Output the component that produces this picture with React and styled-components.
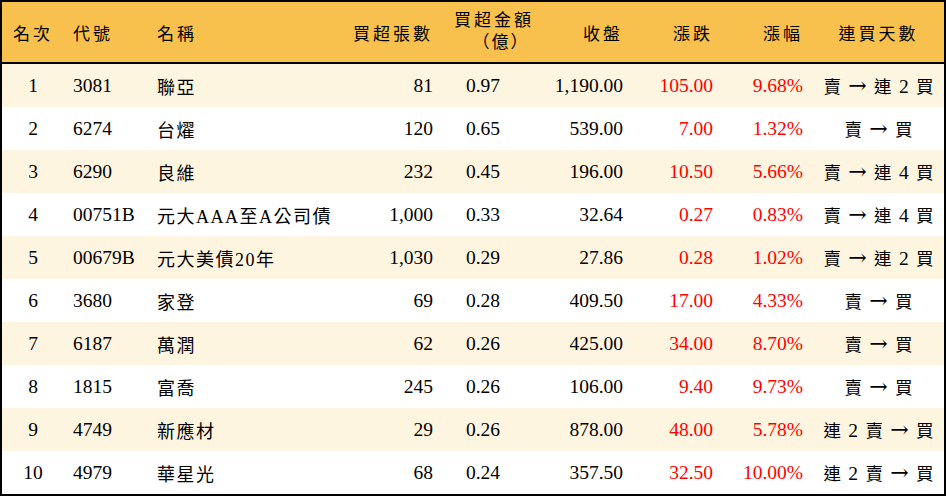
import React from 'react';
import styled, { createGlobalStyle } from 'styled-components';

const GlobalStyle = createGlobalStyle`
  html, body { margin: 0; padding: 0; background: #ffffff; }
  body {
    font-family: "Liberation Serif", "Noto Sans CJK TC", serif;
    color: #000;
  }
`;

const COLS = '62px 86px 195px 98px 67px 123px 90px 90px 131px';
const HEAD_COLS = '62px 86px 195px 98px 102px 88px 90px 90px 131px';

const rows = [
  [1, '3081', '聯亞', '81', '0.97', '1,190.00', '105.00', '9.68%', '賣 → 連 2 買'],
  [2, '6274', '台燿', '120', '0.65', '539.00', '7.00', '1.32%', '賣 → 買'],
  [3, '6290', '良維', '232', '0.45', '196.00', '10.50', '5.66%', '賣 → 連 4 買'],
  [4, '00751B', '元大AAA至A公司債', '1,000', '0.33', '32.64', '0.27', '0.83%', '賣 → 連 4 買'],
  [5, '00679B', '元大美債20年', '1,030', '0.29', '27.86', '0.28', '1.02%', '賣 → 連 2 買'],
  [6, '3680', '家登', '69', '0.28', '409.50', '17.00', '4.33%', '賣 → 買'],
  [7, '6187', '萬潤', '62', '0.26', '425.00', '34.00', '8.70%', '賣 → 買'],
  [8, '1815', '富喬', '245', '0.26', '106.00', '9.40', '9.73%', '賣 → 買'],
  [9, '4749', '新應材', '29', '0.26', '878.00', '48.00', '5.78%', '連 2 賣 → 買'],
  [10, '4979', '華星光', '68', '0.24', '357.50', '32.50', '10.00%', '連 2 賣 → 買'],
];

const Board = styled.div`
  width: 946px;
  height: 496px;
  box-sizing: border-box;
  border: 2px solid #000;
  display: flex;
  flex-direction: column;
`;

const HeaderRow = styled.div`
  display: grid;
  grid-template-columns: ${HEAD_COLS};
  height: 60px;
  background: #f8c04c;
  border-bottom: 2px solid #000;
`;

const Row = styled.div`
  display: grid;
  grid-template-columns: ${COLS};
  height: 43px;
  background: ${(p) => (p.$odd ? '#fef5e0' : '#ffffff')};
`;

const Cell = styled.div`
  display: flex;
  align-items: center;
  justify-content: ${(p) =>
    p.$align === 'right' ? 'flex-end' : p.$align === 'center' ? 'center' : 'flex-start'};
  padding: ${(p) =>
    p.$align === 'right' ? '0 10px 0 0' : p.$align === 'left' ? `0 0 0 ${p.$pad || 8}px` : '0'};
  color: ${(p) => (p.$red ? '#ff0000' : '#000')};
  white-space: nowrap;
  font-size: 19.5px;
  letter-spacing: 0;
`;

const NameCell = styled(Cell)`
  font-size: 18px;
  letter-spacing: 1.5px;
`;

const StreakCell = styled(Cell)`
  font-size: 17.5px;
`;

const StreakText = styled.span`
  white-space: pre;
  letter-spacing: 1.5px;
  margin-right: -1.5px;
`;

const Num = styled.span`
  font-size: 19.5px;
`;

const Arrow = styled.span`
  font-family: "DejaVu Serif", serif;
  font-size: 22px;
  line-height: 1;
`;

const HeadCell = styled(Cell)`
  font-size: 17px;
  letter-spacing: 3px;
`;

const Stack = styled.div`
  display: flex;
  flex-direction: column;
  align-items: center;
  line-height: 22px;
  font-size: 17px;
  letter-spacing: 3px;
`;

const Paren = styled.span`
  padding-left: 14px;
  letter-spacing: 2px;
`;

const aligns = ['center', 'left', 'left', 'right', 'right', 'right', 'right', 'right', 'center'];

function Streak({ text }) {
  const parts = text.split(' ');
  return (
    <StreakCell $align="center">
      <StreakText>
        {parts.map((p, i) => (
          <React.Fragment key={i}>
            {i > 0 && ' '}
            {p === '→' ? <Arrow>→</Arrow> : /\d/.test(p) ? <Num>{p}</Num> : p}
          </React.Fragment>
        ))}
      </StreakText>
    </StreakCell>
  );
}

export default function App() {
  return (
    <>
      <GlobalStyle />
      <Board>
        <HeaderRow>
          <HeadCell $align="center">名次</HeadCell>
          <HeadCell $align="left" $pad={9}>代號</HeadCell>
          <HeadCell $align="left" $pad={7}>名稱</HeadCell>
          <HeadCell $align="right">買超張數</HeadCell>
          <HeadCell $align="center">
            <Stack>
              <span>買超金額</span>
              <Paren>（億）</Paren>
            </Stack>
          </HeadCell>
          <HeadCell $align="right">收盤</HeadCell>
          <HeadCell $align="right">漲跌</HeadCell>
          <HeadCell $align="right">漲幅</HeadCell>
          <HeadCell $align="center">連買天數</HeadCell>
        </HeaderRow>
        {rows.map((r, i) => (
          <Row key={r[0]} $odd={i % 2 === 0}>
            <Cell $align="center">{r[0]}</Cell>
            <Cell $align="left" $pad={9}>{r[1]}</Cell>
            <NameCell $align="left" $pad={7}>{r[2]}</NameCell>
            {r.slice(3, 8).map((v, j) => (
              <Cell key={j} $align={aligns[j + 3]} $red={j >= 3}>
                {v}
              </Cell>
            ))}
            <Streak text={r[8]} />
          </Row>
        ))}
      </Board>
    </>
  );
}
